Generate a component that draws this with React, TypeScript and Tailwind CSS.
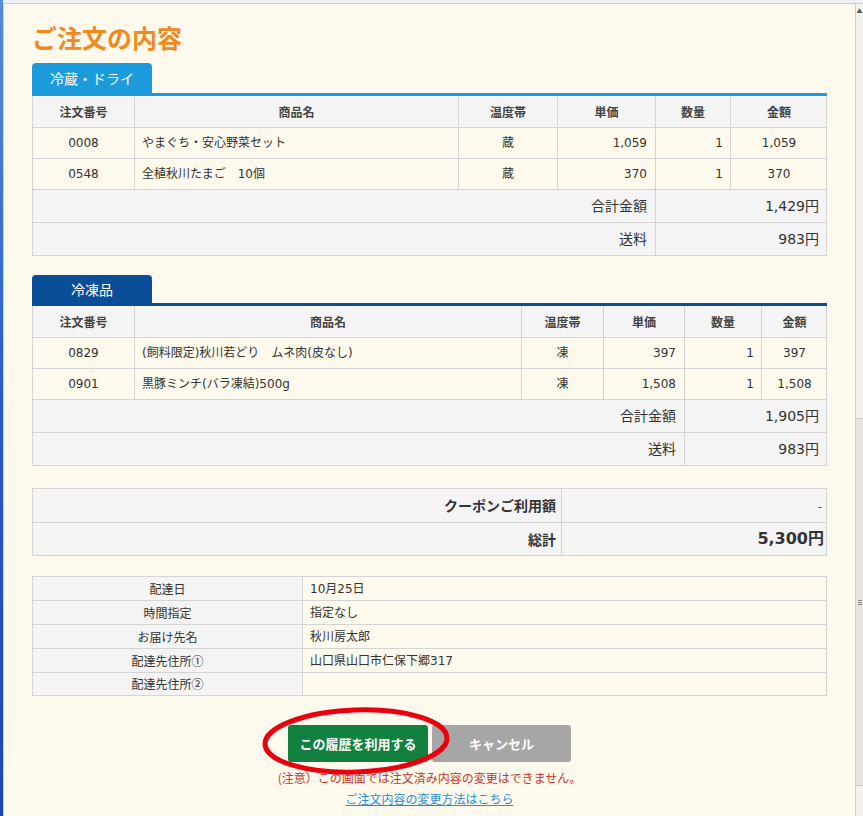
import React from "react";

const FONT = { fontFamily: '"Noto Sans CJK JP", "Noto Sans", sans-serif' };
const TFONT = { fontFamily: '"DejaVu Sans", "Noto Sans CJK JP", sans-serif' };

type Row1 = { no: string; name: string; temp: string; price: string; qty: string; amount: string };

const cellB = "border-l border-[#d4d4d4]";

function OrderTable({
  tabLabel,
  tabColor,
  tabH,
  cols,
  splitCols,
  rows,
  total,
  shipping,
}: {
  tabLabel: string;
  tabColor: "light" | "dark";
  tabH: string;
  cols: string;
  splitCols: string;
  rows: Row1[];
  total: string;
  shipping: string;
}) {
  const tabBg = tabColor === "light" ? "bg-[#1b9bdc]" : "bg-[#0b4e98]";
  const lineBg = tabColor === "light" ? "bg-[#1b9bdc]" : "bg-[#0b4e98]";
  return (
    <div className="w-[795px]">
      <div className={`${tabH} w-[120px] ${tabBg} rounded-t-[4px] flex items-center justify-center text-white text-[14px]`}>
        {tabLabel}
      </div>
      <div className={`h-[3px] ${lineBg}`} />
      <div className="border-r border-b border-[#d4d4d4] text-[12px] text-[#333]" style={TFONT}>
        <div className={`grid ${cols} h-[31px] bg-[#f4f4f4] font-bold text-[#444]`} style={FONT}>
          <div className={`${cellB} flex items-center justify-center`}>注文番号</div>
          <div className={`${cellB} flex items-center justify-center`}>商品名</div>
          <div className={`${cellB} flex items-center justify-center`}>温度帯</div>
          <div className={`${cellB} flex items-center justify-center`}>単価</div>
          <div className={`${cellB} flex items-center justify-center`}>数量</div>
          <div className={`${cellB} flex items-center justify-center`}>金額</div>
        </div>
        {rows.map((r) => (
          <div key={r.no} className={`grid ${cols} h-[31px] border-t border-[#d4d4d4]`}>
            <div className={`${cellB} flex items-center justify-center`}>{r.no}</div>
            <div className={`${cellB} flex items-center pl-[7px]`}>{r.name}</div>
            <div className={`${cellB} flex items-center justify-center`}>{r.temp}</div>
            <div className={`${cellB} flex items-center justify-end pr-[8px]`}>{r.price}</div>
            <div className={`${cellB} flex items-center justify-end pr-[7px]`}>{r.qty}</div>
            <div className={`${cellB} flex items-center justify-center`}>{r.amount}</div>
          </div>
        ))}
        <div className={`grid ${splitCols} h-[33px] border-t border-[#d4d4d4] bg-[#f4f4f4] text-[14px]`}>
          <div className={`${cellB} flex items-center justify-end pr-[8px]`}>合計金額</div>
          <div className={`${cellB} flex items-center justify-end pr-[8px]`}>{total}</div>
        </div>
        <div className={`grid ${splitCols} h-[33px] border-t border-[#d4d4d4] bg-[#f4f4f4] text-[14px]`}>
          <div className={`${cellB} flex items-center justify-end pr-[8px]`}>送料</div>
          <div className={`${cellB} flex items-center justify-end pr-[8px]`}>{shipping}</div>
        </div>
      </div>
    </div>
  );
}

const delivery: [string, string, string][] = [
  ["配達日", "10月25日", "h-[23px]"],
  ["時間指定", "指定なし", "h-[24px]"],
  ["お届け先名", "秋川房太郎", "h-[24px]"],
  ["配達先住所①", "山口県山口市仁保下郷317", "h-[24px]"],
  ["配達先住所②", "", "h-[23px]"],
];

export default function App() {
  return (
    <div className="w-[863px] h-[816px] flex overflow-hidden bg-[#eef0f2]" style={FONT}>
      <div className="w-[3px] h-full bg-gradient-to-b from-[#4f8fd6] via-[#2a5cc0] to-[#1e46b2]" />
      <div className="flex-1 flex flex-col pt-[3px]">
        <div className="flex-1 flex border-t border-l border-[#cfcfcf] bg-[#fdf9ed]">
          <div className="flex-1 flex flex-col pl-[28px]">
            <h1 className="mt-[17px] h-[32px] leading-[32px] text-[25px] font-bold text-[#f08a1c]">ご注文の内容</h1>
            <div className="mt-[10px]">
              <OrderTable
                tabLabel="冷蔵・ドライ"
                tabColor="light"
                tabH="h-[30px]"
                cols="grid-cols-[102px_324px_99px_98px_75px_97px]"
                splitCols="grid-cols-[623px_172px]"
                rows={[
                  { no: "0008", name: "やまぐち・安心野菜セット", temp: "蔵", price: "1,059", qty: "1", amount: "1,059" },
                  { no: "0548", name: "全植秋川たまご　10個", temp: "蔵", price: "370", qty: "1", amount: "370" },
                ]}
                total="1,429円"
                shipping="983円"
              />
            </div>
            <div className="mt-[19px]">
              <OrderTable
                tabLabel="冷凍品"
                tabColor="dark"
                tabH="h-[28px]"
                cols="grid-cols-[102px_387px_82px_81px_77px_66px]"
                splitCols="grid-cols-[652px_143px]"
                rows={[
                  { no: "0829", name: "(飼料限定)秋川若どり　ムネ肉(皮なし)", temp: "凍", price: "397", qty: "1", amount: "397" },
                  { no: "0901", name: "黒豚ミンチ(バラ凍結)500g", temp: "凍", price: "1,508", qty: "1", amount: "1,508" },
                ]}
                total="1,905円"
                shipping="983円"
              />
            </div>

            <div className="mt-[22px] w-[795px] border border-[#d4d4d4] bg-[#f4f4f4] text-[#333]">
              <div className="grid grid-cols-[528px_267px] h-[33px]">
                <div className="flex items-center justify-end pr-[5px] text-[14px] font-bold">クーポンご利用額</div>
                <div className={`${cellB} flex items-center justify-end pr-[6px] text-[12px]`}>-</div>
              </div>
              <div className="grid grid-cols-[528px_267px] h-[33px] border-t border-[#d4d4d4]">
                <div className="flex items-center justify-end pr-[5px] text-[14px] font-bold">総計</div>
                <div className={`${cellB} flex items-center justify-end pr-[4px] text-[16px] font-bold`} style={TFONT}>
                  5,300円
                </div>
              </div>
            </div>

            <div className="mt-[20px] w-[795px] border border-[#d4d4d4] text-[12px] text-[#333]">
              {delivery.map(([k, v, h], i) => (
                <div key={k} className={`grid grid-cols-[269px_526px] ${h} ${i > 0 ? "border-t border-[#d4d4d4]" : ""}`}>
                  <div className="bg-[#f4f4f4] flex items-center justify-center">{k}</div>
                  <div className={`${cellB} flex items-center pl-[7px]`} style={TFONT}>
                    {v}
                  </div>
                </div>
              ))}
            </div>

            <div className="w-[795px] flex flex-col items-center">
              <div className="relative mt-[29px] flex gap-[4px]">
                <button className="w-[140px] h-[37px] rounded-[3px] bg-[#12813f] text-white text-[13px] font-bold">
                  この履歴を利用する
                </button>
                <button className="w-[139px] h-[37px] rounded-[3px] bg-[#a6a6a6] text-white text-[13px] font-bold">
                  キャンセル
                </button>
                <svg
                  className="absolute left-[-27px] top-[-19px] pointer-events-none"
                  width="192"
                  height="70"
                  viewBox="0 0 192 70"
                >
                  <ellipse
                    cx="95"
                    cy="35"
                    rx="91"
                    ry="31"
                    fill="none"
                    stroke="#e8000f"
                    strokeWidth="5"
                    transform="rotate(-2 95 35)"
                  />
                </svg>
              </div>
              <p className="mt-[7px] leading-[18px] text-[12px] text-[#c8352a]">
                (注意）この画面では注文済み内容の変更はできません。
              </p>
              <a className="mt-[3px] leading-[18px] text-[12px] text-[#2a8fd0] underline">ご注文内容の変更方法はこちら</a>
            </div>
          </div>
          <div className="w-[8px] flex flex-col border-l border-[#d0d0d0] bg-[#f1f1f1]">
            <div className="h-[14px] flex items-center justify-center text-[6px] text-[#555] leading-none">▲</div>
            <div className="mt-[400px] h-[368px] bg-[#e4e4e4] border-t border-b border-[#c9c9c9] flex items-center justify-center">
              <div className="w-[4px] flex flex-col gap-[1px]">
                <div className="h-px bg-[#888]" />
                <div className="h-px bg-[#888]" />
                <div className="h-px bg-[#888]" />
              </div>
            </div>
          </div>
        </div>
      </div>
    </div>
  );
}
